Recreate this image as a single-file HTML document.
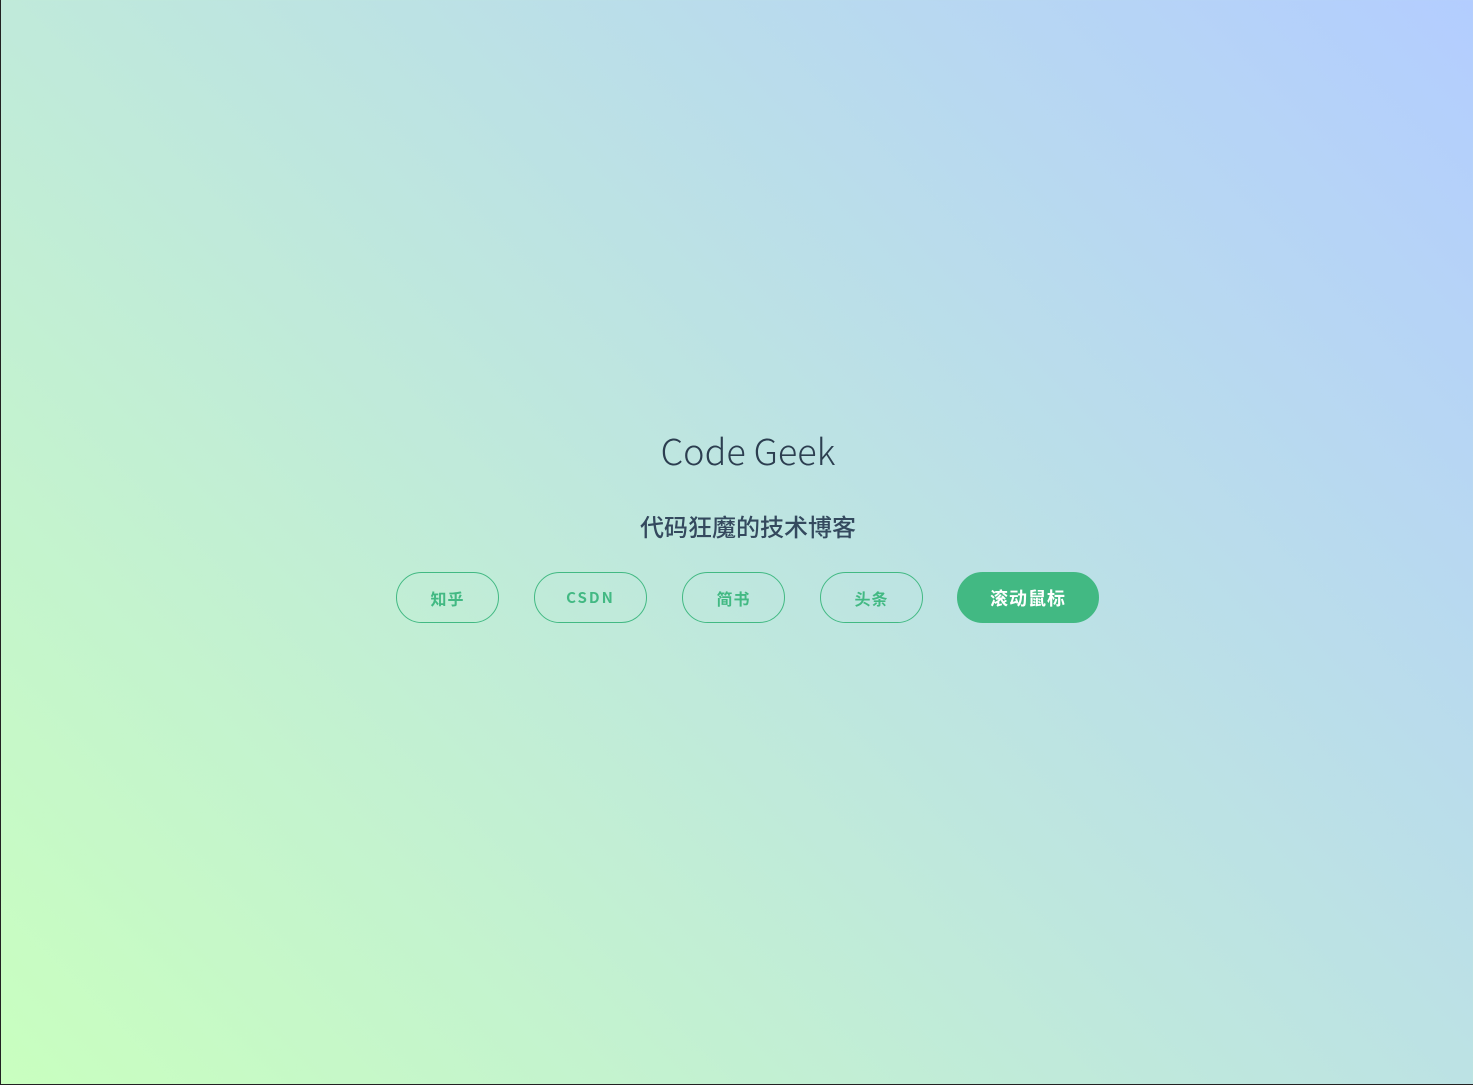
<!DOCTYPE html>
<html><head><meta charset="utf-8"><style>
html,body{margin:0;padding:0;width:1473px;height:1085px;overflow:hidden}
body{background:linear-gradient(45deg,#c9ffbf 0%,#b3cdff 100%);border-left:1px solid #222;border-bottom:1px solid #222;box-sizing:border-box;position:relative;font-family:"Liberation Sans","Noto Sans CJK SC",sans-serif}
h1{position:absolute;left:0;width:1494px;top:424px;margin:0;text-align:center;font-weight:300;font-size:36px;color:#2c3e50;font-family:"Noto Sans CJK SC","Liberation Sans",sans-serif}
h2{position:absolute;left:0;width:1494px;top:512px;margin:0;text-align:center;font-weight:500;font-size:24px;color:#34495e;line-height:34px}
.b{position:absolute;top:572px;height:51px;box-sizing:border-box;border:1px solid #42b983;border-radius:26px;color:#42b983;font-size:16px;font-weight:700;display:flex;align-items:center;justify-content:center;letter-spacing:1px}
.f{background:#42b983;color:#fff;border-color:#42b983;font-size:18px}
</style></head><body>
<h1>Code Geek</h1>
<h2>代码狂魔的技术博客</h2>
<div class="b" style="left:395px;width:103px">知乎</div>
<div class="b" style="left:533px;width:113px;font-size:15px;letter-spacing:2px;font-family:'Noto Sans CJK SC',sans-serif">CSDN</div>
<div class="b" style="left:681px;width:103px">简书</div>
<div class="b" style="left:819px;width:103px">头条</div>
<div class="b f" style="left:956px;width:142px">滚动鼠标</div>
</body></html>
